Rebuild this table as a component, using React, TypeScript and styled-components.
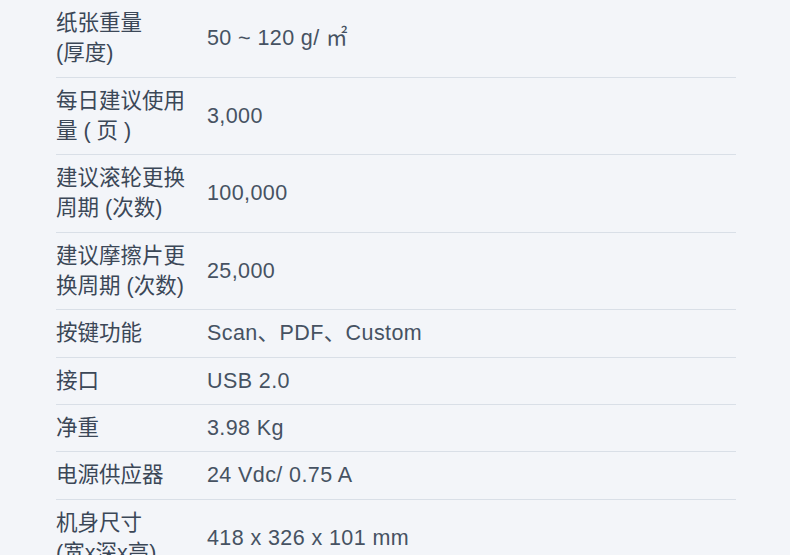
import React from "react";
import styled, { createGlobalStyle } from "styled-components";

const GlobalStyle = createGlobalStyle`
  html, body {
    margin: 0;
    padding: 0;
    background: #f3f5f9;
  }
  body {
    font-family: "Liberation Sans", "Noto Sans CJK SC", sans-serif;
    color: #3e4a5a;
  }
`;

interface SpecRow {
  label: React.ReactNode;
  value: string;
}

const rows: SpecRow[] = [
  { label: <>纸张重量<br />(厚度)</>, value: "50 ~ 120 g/ ㎡" },
  { label: <>每日建议使用<br />量 ( 页 )</>, value: "3,000" },
  { label: <>建议滚轮更换<br />周期 (次数)</>, value: "100,000" },
  { label: <>建议摩擦片更<br />换周期 (次数)</>, value: "25,000" },
  { label: "按键功能", value: "Scan、PDF、Custom" },
  { label: "接口", value: "USB 2.0" },
  { label: "净重", value: "3.98 Kg" },
  { label: "电源供应器", value: "24 Vdc/ 0.75 A" },
  { label: <>机身尺寸<br />(宽x深x高)</>, value: "418 x 326 x 101 mm" },
];

const Page = styled.div`
  width: 790px;
  height: 555px;
  overflow: hidden;
  background: #f3f5f9;
`;

const Table = styled.div`
  margin-left: 56px;
  width: 680px;
  display: flex;
  flex-direction: column;
`;

const Row = styled.div`
  display: grid;
  grid-template-columns: 151px 1fr;
  align-items: center;
  padding: 8px 0;
  border-bottom: 1px solid #d9dfe7;
`;

const Label = styled.div`
  font-size: 21.5px;
  line-height: 30.3px;
  color: #3b4757;
`;

const Value = styled.div`
  font-size: 21.5px;
  line-height: 30.3px;
  letter-spacing: 0.4px;
  color: #465262;
`;

export default function App() {
  return (
    <Page>
      <GlobalStyle />
      <Table>
        {rows.map((r, i) => (
          <Row key={i}>
            <Label>{r.label}</Label>
            <Value>{r.value}</Value>
          </Row>
        ))}
      </Table>
    </Page>
  );
}
